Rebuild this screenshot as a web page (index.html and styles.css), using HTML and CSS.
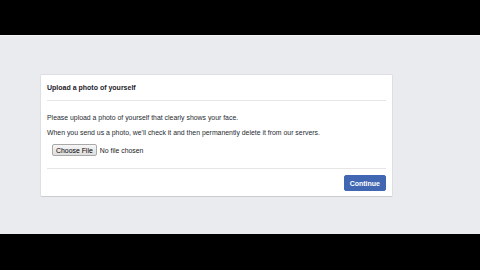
FILE: index.html
```html
<!DOCTYPE html>
<html lang="en">
<head>
    <meta charset="UTF-8">
    <title>Upload a photo of yourself</title>
    <link rel="stylesheet" href="styles.css">
</head>
<body>

<div class="bar"></div>

<div class="stage">
    <div class="card">
        <!-- Header -->
        <div class="card-header">
            <h2>Upload a photo of yourself</h2>
        </div>

        <!-- Body -->
        <div class="card-body">
            <p>Please upload a photo of yourself that clearly shows your face.</p>
            <p>When you send us a photo, we'll check it and then permanently delete it from our servers.</p>
            <div class="file-row">
                <button class="choose">Choose File</button>
                <span class="file-name">No file chosen</span>
            </div>
        </div>

        <!-- Footer -->
        <div class="card-footer">
            <button class="continue">Continue</button>
        </div>
    </div>
</div>

<div class="bar bottom"></div>

</body>
</html>
```

FILE: styles.css
```css
body {
    margin: 0;
    padding: 0;
    background-color: #000;
    font-family: 'Liberation Sans', Arial, sans-serif;
    color: #1d2129;
}

.bar {
    height: 35px;
    background-color: #000;
}

.bar.bottom {
    height: 36px;
}

.stage {
    height: 199px;
    background-color: #e9ebee;
    border-top: 1px solid #f4f5f7;
    box-sizing: border-box;
    padding-top: 38px;
    padding-left: 40px;
}

.card {
    width: 353px;
    height: 123px;
    box-sizing: border-box;
    background: #fff;
    border: 1px solid #dddfe2;
    border-bottom-color: #c9ccd1;
    border-radius: 2px;
    padding: 0 6px;
}

.card-header {
    height: 26px;
    border-bottom: 1px solid #e5e5e5;
    box-sizing: border-box;
    display: flex;
    align-items: center;
}

.card-header h2 {
    margin: 0;
    font-size: 7px;
    font-weight: bold;
    color: #1d2129;
}

.card-body {
    padding: 9px 0 12px;
    border-bottom: 1px solid #e5e5e5;
    font-size: 6.9px;
    color: #262a30;
}

.card-body p {
    margin: 0;
    line-height: 15px;
}

.file-row {
    display: flex;
    align-items: center;
    gap: 3px;
    margin-top: 4px;
    margin-left: 5px;
}

.choose {
    height: 12px;
    padding: 0 3px;
    font-family: inherit;
    font-size: 6.9px;
    color: #000;
    background: linear-gradient(#f6f6f6, #dedede);
    border: 1px solid #a9a9a9;
    border-radius: 2px;
}

.file-name {
    color: #222;
}

.card-footer {
    display: flex;
    justify-content: flex-end;
    padding-top: 6px;
}

.continue {
    height: 16px;
    padding: 0 5px;
    font-family: inherit;
    font-size: 7px;
    font-weight: bold;
    color: #fff;
    background-color: #4267b2;
    border: 1px solid #4267b2;
    border-radius: 2px;
}
```
